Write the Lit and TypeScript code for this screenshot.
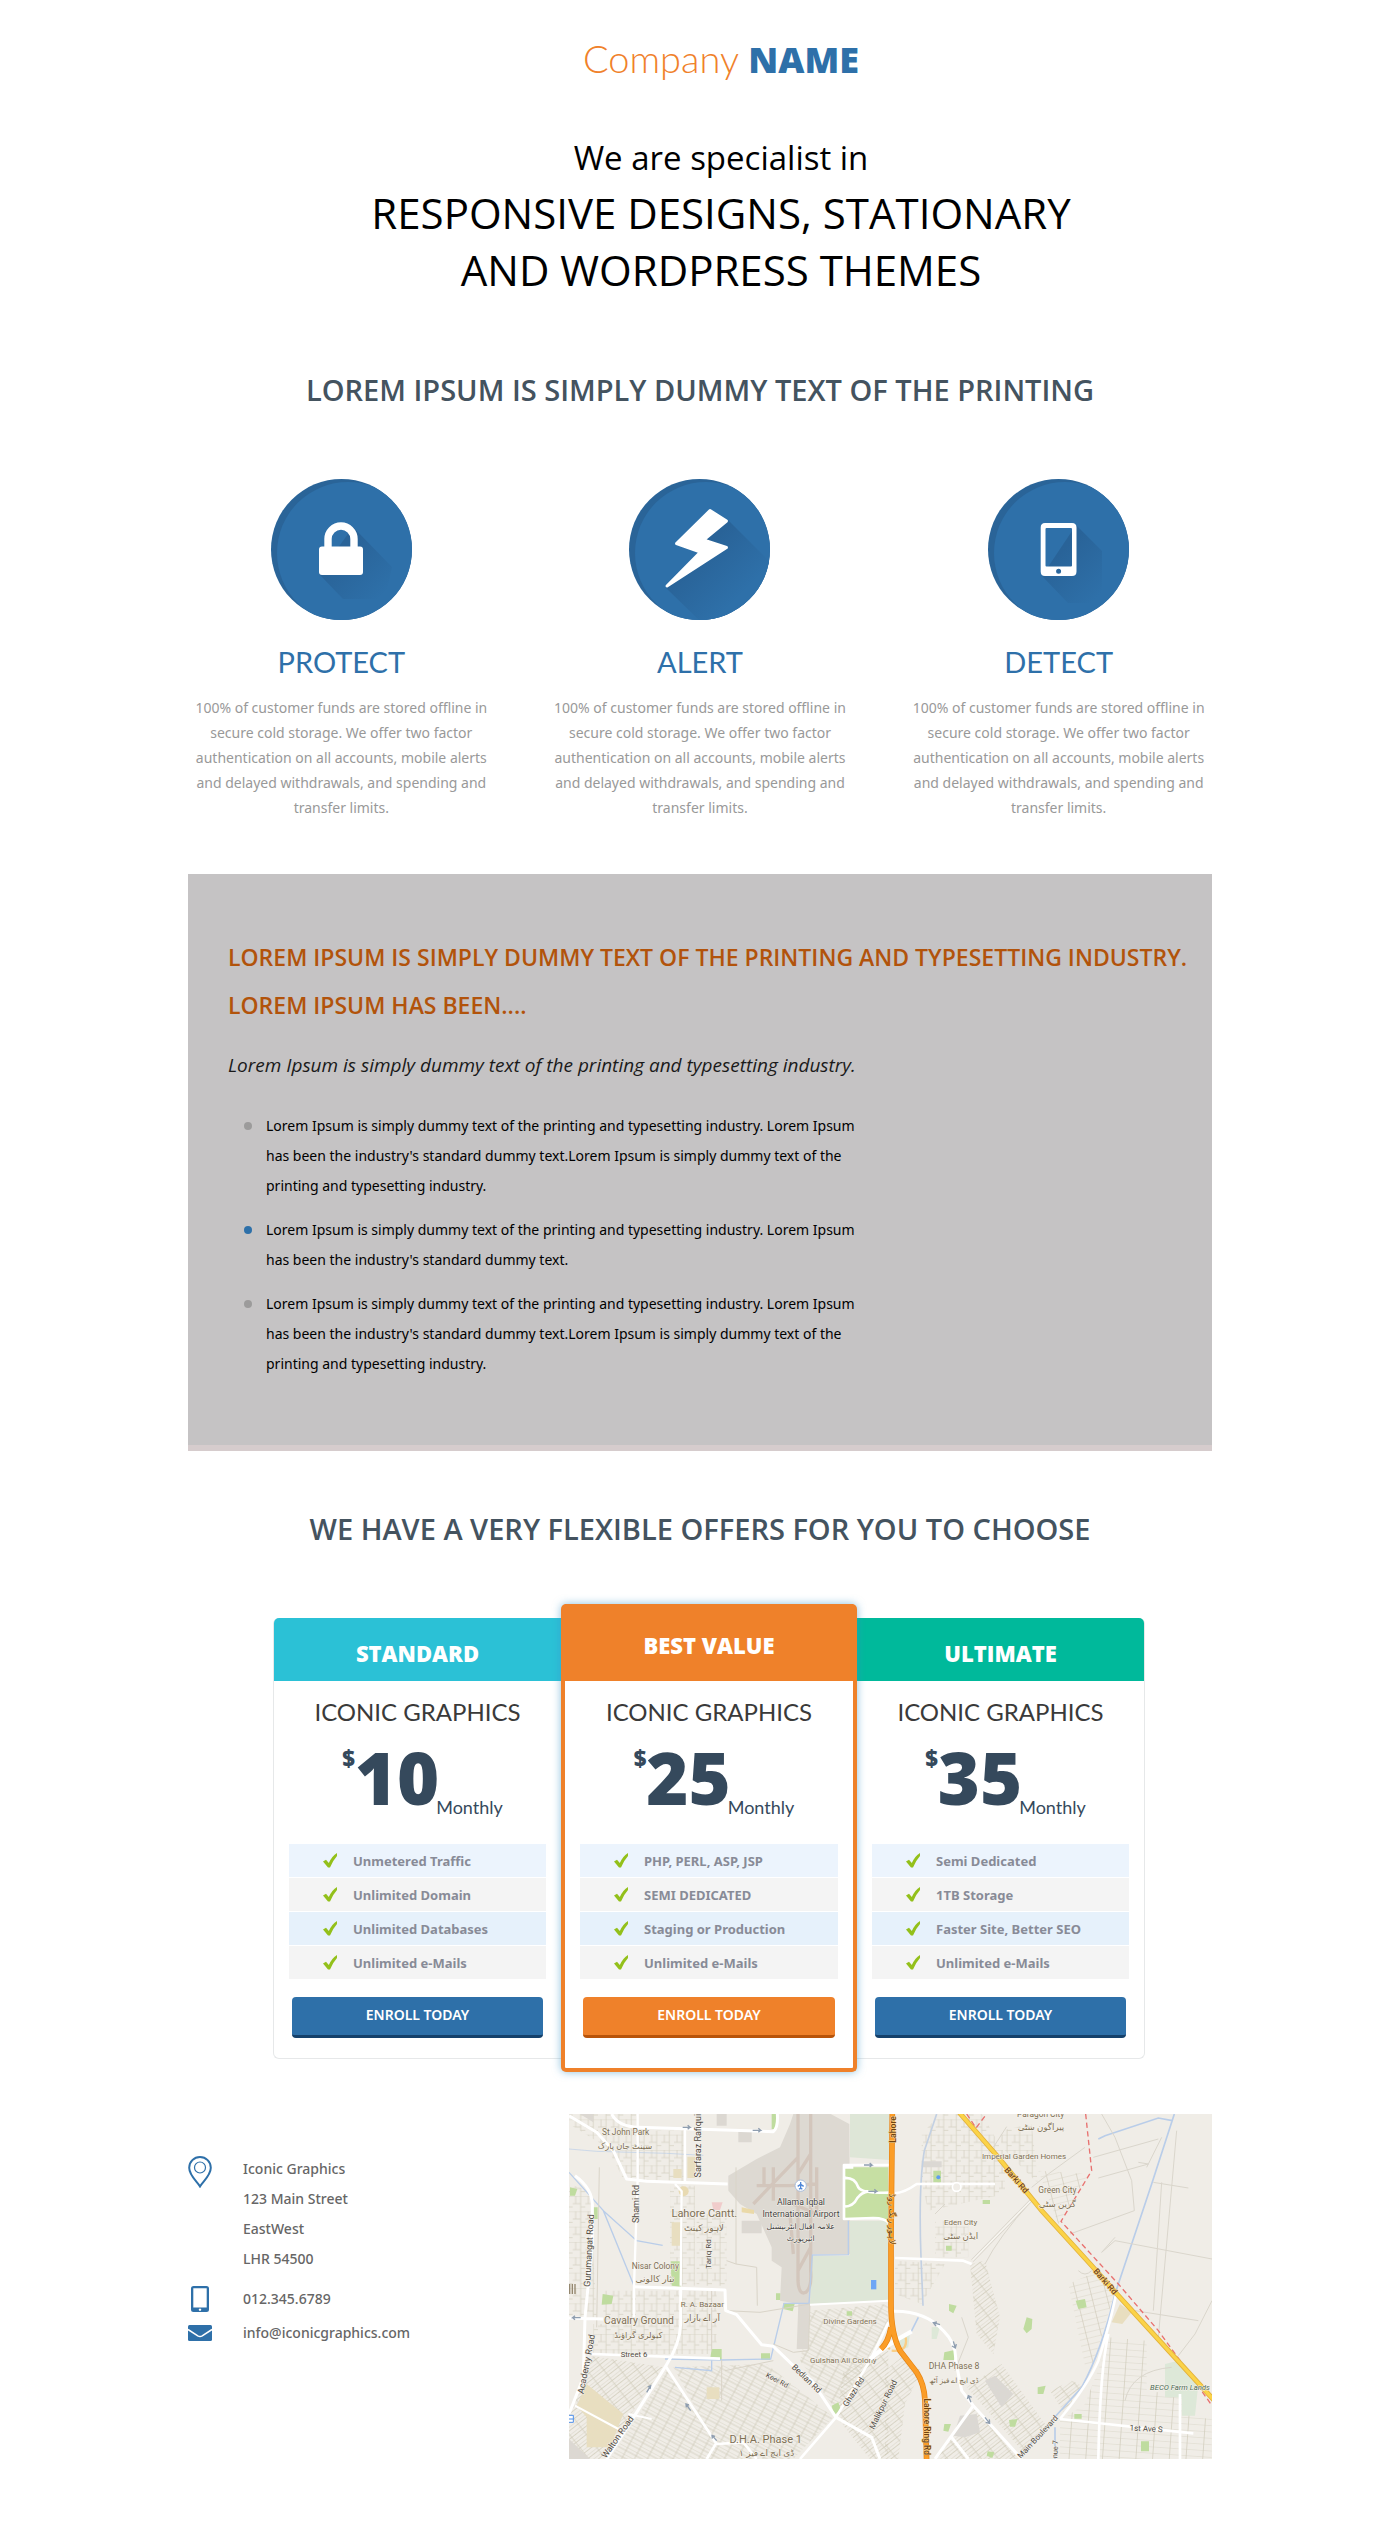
import { LitElement, html, svg, css } from "lit";
import { customElement, property } from "lit/decorators.js";

interface Feature { icon: "lock" | "bolt" | "phone"; title: string; }
interface Plan { tone: "cyan" | "orange" | "green"; name: string; price: string; perks: string[]; }

const FEATURES: Feature[] = [
  { icon: "lock", title: "PROTECT" },
  { icon: "bolt", title: "ALERT" },
  { icon: "phone", title: "DETECT" },
];
const FEATURE_TEXT =
  "100% of customer funds are stored offline in secure cold storage. We offer two factor authentication on all accounts, mobile alerts and delayed withdrawals, and spending and transfer limits.";

const LONG_POINT =
  "Lorem Ipsum is simply dummy text of the printing and typesetting industry. Lorem Ipsum has been the industry's standard dummy text.Lorem Ipsum is simply dummy text of the printing and typesetting industry.";
const SHORT_POINT =
  "Lorem Ipsum is simply dummy text of the printing and typesetting industry. Lorem Ipsum has been the industry's standard dummy text.";

const PLANS: Plan[] = [
  { tone: "cyan", name: "STANDARD", price: "10", perks: ["Unmetered Traffic", "Unlimited Domain", "Unlimited Databases", "Unlimited e-Mails"] },
  { tone: "orange", name: "BEST VALUE", price: "25", perks: ["PHP, PERL, ASP, JSP", "SEMI DEDICATED", "Staging or Production", "Unlimited e-Mails"] },
  { tone: "green", name: "ULTIMATE", price: "35", perks: ["Semi Dedicated", "1TB Storage", "Faster Site, Better SEO", "Unlimited e-Mails"] },
];

@customElement("feature-icon")
export class FeatureIcon extends LitElement {
  @property() name: Feature["icon"] = "lock";

  static styles = css`
    :host { display: block; }
    .disc { display: block; width: 141px; height: 141px; margin: 0 auto; }
  `;

  private glyph() {
    if (this.name === "lock") {
      return svg`
        <path d="M82 48 L121 88 L114 120 L72 120 L48 95 Z" fill="url(#shade)"/>
        <rect x="48" y="67.500" width="44" height="28.500" rx="3" fill="#fff"/>
        <path d="M57 69 V60 A13 13 0 0 1 83 60 V69" fill="none" stroke="#fff" stroke-width="7.400"/>`;
    }
    if (this.name === "bolt") {
      return svg`
        <path d="M99 41 L140 82 L140 141 L70 141 L37 109 L70 74 L46 65 Z" fill="url(#shade)"/>
        <path d="M81 31.500 L97.500 42 L74.500 61 L97.500 68.500 L38 107 L71.500 73 L47.500 64.500 Z"
          fill="#fff" stroke="#fff" stroke-width="3" stroke-linejoin="round"/>`;
    }
    return svg`
      <path d="M88 46 L114 72 L114 124 L80 124 L54 97 Z" fill="url(#shade)"/>
      <path fill-rule="evenodd" fill="#fff" d="M57 44 H84 Q88.500 44 88.500 48.500 V92.500 Q88.500 97 84 97 H57 Q52.700 97 52.700 92.500 V48.500 Q52.700 44 57 44 Z
        M58.500 49 Q57.500 49 57.500 50 V86.500 Q57.500 87.500 58.500 87.500 H83 Q84 87.500 84 86.500 V50 Q84 49 83 49 Z
        M70.600 89.700 A2.500 2.500 0 1 0 70.600 94.700 A2.500 2.500 0 1 0 70.600 89.700 Z"/>`;
  }

  render() {
    return html`<svg class="disc" viewBox="0 0 141 141" aria-hidden="true">
      <defs>
        <clipPath id="rim"><circle cx="70.500" cy="70.500" r="70.500"/></clipPath>
        <linearGradient id="shade" gradientUnits="userSpaceOnUse" x1="62" y1="62" x2="114" y2="114">
          <stop offset="0.200" stop-color="#296398"/><stop offset="1" stop-color="#2e70a9"/>
        </linearGradient>
      </defs>
      <g clip-path="url(#rim)">
        <rect width="141" height="141" fill="#2a6498"/>
        <circle cx="77" cy="74" r="71" fill="#2e70a9"/>
        ${this.glyph()}
      </g>
    </svg>`;
  }
}

/* Street map of the Lahore Cantt. area. West and east halves keep their own origin. */
@customElement("area-map")
export class AreaMap extends LitElement {
  static styles = css`
    :host { display: block; }
    .map { display: block; width: 100%; height: auto; }
    text { font-family: Roboto, "DejaVu Sans", sans-serif; text-anchor: middle; fill: #7d6f54; paint-order: stroke; stroke: #f7f4ee; stroke-width: 3px; stroke-linejoin: round; }
    .road { fill: #504b44; }
    .dark { fill: #434242; }
    .hwy { fill: #6f4310; stroke: #fbd591; font-weight: 500; }
    .park { fill: #4b6a54; font-style: italic; }
  `;

  private label(x: number, y: number, size: number, text: string, turn = 0, kind = "") {
    return svg`<text class=${kind} x=${x} y=${y} font-size=${size} transform=${`rotate(${turn} ${x} ${y})`}>${text}</text>`;
  }

  render() {
    const t = this.label;
    return html`<svg class="map" viewBox="0 0 1929 1035" role="img" aria-label="Map of Lahore Cantt.">
      <defs>
        <pattern id="p0" width="38" height="46" patternUnits="userSpaceOnUse"><path d="M0 0 H38 M9 0 V23 M24 0 V46 M0 23 H24 M24 33 H38" stroke="#d2cdbd" stroke-width="2" fill="none"/></pattern>
        <pattern id="p1" width="34" height="22" patternUnits="userSpaceOnUse" patternTransform="rotate(28)"><path d="M0 0 H34 M0 11 H34 M17 0 V22" stroke="#cdc8b6" stroke-width="2" fill="none"/></pattern>
        <pattern id="p2" width="40" height="20" patternUnits="userSpaceOnUse" patternTransform="rotate(-38)"><path d="M0 0 H40 M0 10 H40 M12 0 V20" stroke="#cdc8b6" stroke-width="2" fill="none"/></pattern>
        <pattern id="p3" width="50" height="19" patternUnits="userSpaceOnUse" patternTransform="rotate(4)"><path d="M0 0 H50 M25 0 V19" stroke="#cfcab9" stroke-width="2" fill="none"/></pattern>
        <pattern id="p4" width="44" height="18" patternUnits="userSpaceOnUse" patternTransform="rotate(-14)"><path d="M0 0 H44 M22 0 V18" stroke="#cfcab9" stroke-width="2" fill="none"/></pattern>
      </defs>
      <rect width="1929" height="1035" fill="#f0ede7"/>

      <g transform="translate(-27 -30)">
        <path d="M27 30 H230 V230 L190 225 L140 130 L27 60 Z M235 80 H370 V230 H235 Z M27 240 L90 260 L110 640 H27 Z M330 245 H405 V545 H330 Z M410 330 L500 330 V545 H410 Z M130 560 H360 V750 H100 V660 H130 Z M370 560 H470 V750 H340 Z" fill="url(#p0)"/>
        <path d="M90 755 L310 790 L120 1065 H27 V930 Z M850 800 L985 740 V1065 H930 L830 940 Z" fill="url(#p2)"/>
        <path d="M340 790 L620 780 L820 940 L700 1065 H240 L150 1065 L320 800 L460 1010 Z M750 620 L985 600 V660 L930 750 L830 920 L720 770 Z" fill="url(#p1)"/>
        <path d="M80 840 L190 930 L150 1030 L80 1030 L80 940 L50 905 Z M382 158 H405 V222 H382 Z M340 195 H365 V222 H340 Z M335 355 H365 V425 H335 Z M440 850 H478 V885 H440 Z" fill="#e8dec0"/>
        <circle cx="371" cy="262" r="15" fill="#e8dab2"/>
        <path d="M27 1005 L90 1065 H27 Z M60 30 H100 V55 Z M470 30 H500 V65 H470 Z M535 80 H575 V115 H535 Z M545 350 H605 V388 H545 Z" fill="#dcd8d2"/>
        <path d="M100 310 H113 V345 H100 Z M128 570 L160 575 L155 600 L125 602 Z M332 472 H362 V548 L335 545 Z M455 735 H485 V768 H450 Z M670 598 L704 600 L698 622 L670 615 Z M603 748 L630 748 V768 H603 Z M648 568 H662 V588 H648 Z M815 905 L835 895 L842 915 L822 935 Z M635 30 H648 V75 H635 Z M30 250 L52 255 L45 275 H30 Z M860 622 H876 V635 H860 Z" fill="#bfdc9f"/>
        <path d="M870 30 H988 V168 L870 160 Z M755 455 H868 V350 H985 V592 L750 600 Z" fill="#dee6d7"/>
        <path d="M505 215 L590 165 L660 130 L690 60 L700 30 H812 L868 60 L870 450 H755 L750 600 L745 735 L710 735 L715 600 L660 590 L665 490 L635 470 V430 L590 330 L540 300 L505 260 Z" fill="#ddd9d2"/>
        <path d="M714 30 V530 Q716 575 738 565 Q756 550 752 500 V30 M590 245 H690 L770 240 M580 300 L714 160 M612 190 V245 M640 190 V290 M690 330 L700 450 M714 210 L752 150 M714 500 L752 430 M770 190 V330 L700 300" fill="none" stroke="#d3c6bc" stroke-width="10"/>
        <path d="M455 295 H488 L480 318 H460 Z" fill="#f0cccb"/>
        <path d="M545 310 L582 318 V330 L545 325 Z" fill="#ead9a8"/>
        <path d="M850 190 L985 190 V345 L850 345 Z" fill="#c6dfa3"/>
        <path d="M933 528 H949 V556 H933 Z" fill="#6fa6f5"/>
        <g fill="none" stroke="#b9cde9" stroke-width="4">
          <path d="M27 205 L130 320 L222 545 M130 320 L230 410 L308 424"/>
          <path d="M27 135 L110 142 L320 148 L430 154" stroke-width="2"/>
          <path d="M865 350 V452 L757 453 L747 598 L672 598 L632 765 L485 768 L315 765 M345 790 L455 800 V765"/>
        </g>
        <g fill="none" stroke="#d9d4c8" stroke-width="3">
          <path d="M118 190 L110 670 M485 768 V890 M455 560 V740 M528 190 V480 L590 490 L592 605 M500 470 L528 480 M500 620 L600 625 L750 600 M640 720 L700 745 L745 740 L750 600 M495 800 L640 770"/>
        </g>
        <g fill="none" stroke="#fff" stroke-width="9" stroke-linejoin="round">
          <path d="M27 35 L110 85 L160 140 L200 225 L260 232 L503 240"/>
          <path d="M155 30 Q175 68 235 70 L640 83 Q655 70 652 30"/>
          <path d="M233 30 V225 L222 545 V640 M375 70 V232 M345 240 L365 262 L362 545" stroke-width="7"/>
          <path d="M222 548 L495 558 L497 620 L530 632 L605 722 L640 727 L700 785 L755 830 L828 940 L935 1000 L960 1065"/>
          <path d="M45 215 Q100 255 97 310 V420 L75 640 L70 820 L27 930 M27 642 L130 645 M362 548 V660 Q360 720 318 785 L205 965 L140 1065"/>
          <path d="M318 788 L470 1020 L550 1015 L590 1065 M470 1015 L440 1065 M985 655 L935 760 L828 940 L720 1065 M95 750 L480 764" stroke-width="8"/>
          <path d="M988 183 H852 V345 L940 342 Q975 342 988 358 M852 222 Q885 220 895 250 Q905 268 988 266 M852 308 Q880 308 892 282 Q905 265 925 262 M850 190 L880 190" stroke-width="8"/>
          <path d="M750 602 L985 590 M45 905 L175 975 M205 930 L275 945" stroke-width="6"/>
        </g>
        <g fill="none" stroke="#8f9eb0" stroke-width="4"><path d="M368 70 H390 l-7 -6 m7 6 l-7 6 M578 79 H602 l-7 -6 m7 6 l-7 6 M912 183 H936 l-7 -6 m7 6 l-7 6 M925 262 H950 l-7 -6 m7 6 l-7 6 M62 641 H38 l7 -6 m-7 6 l7 6 M260 865 l12 -20 m-2 10 l2 -10 l-9 4 M392 920 l-14 -20 m1 10 l-1 -10 l9 3 M470 1010 l-14 -16 m1 10 l-1 -10 l9 3"/></g>
        <circle cx="722" cy="245" r="17" fill="#fff" stroke="#a9bedd" stroke-width="3"/>
        <path d="M722 234 V256 M713 247 L722 241 L731 247 M717 256 L722 252 L727 256" fill="none" stroke="#4d86d8" stroke-width="4"/>
        <path d="M27 934 H40 V955 H27 M27 945 H40" fill="#fff" stroke="#4f8fe8" stroke-width="3"/>
        <path d="M29 540 V570 M37 540 V570 M45 540 V570" stroke="#94876f" stroke-width="4"/>
        ${t(197, 94, 25, "St John Park")}${t(195, 136, 25, "سینٹ جان پارک")}
        ${t(424, 125, 27, "Sarfaraz Rafiqui", -90, "road")}${t(236, 300, 27, "Shami Rd", -90, "road")}
        ${t(96, 440, 27, "Gurumangat Road", -87, "road")}${t(453, 450, 24, "Tariq Rd", -90, "road")}
        ${t(433, 338, 33, "Lahore Cantt.")}${t(432, 382, 27, "لاہور کینٹ")}
        ${t(286, 494, 25, "Nisar Colony")}${t(285, 535, 27, "نثار کالونی")}
        ${t(427, 610, 24, "R. A. Bazaar")}${t(427, 652, 27, "آر اے بازار")}
        ${t(237, 660, 31, "Cavalry Ground")}${t(235, 702, 25, "کیولری گراؤنڈ")}
        ${t(222, 760, 23, "Street 6", 0, "road")}${t(88, 782, 27, "Academy Road", -79, "road")}
        ${t(180, 1004, 26, "Walton Road", -55, "road")}
        ${t(723, 302, 26, "Allama Iqbal", 0, "dark")}${t(723, 340, 26, "International Airport", 0, "dark")}
        ${t(722, 376, 23, "علامہ اقبال انٹرنیشنل", 0, "dark")}${t(722, 410, 23, "ائیرپورٹ", 0, "dark")}
        ${t(870, 660, 24, "Divine Gardens")}${t(850, 777, 24, "Gulshan Ali Colony")}
        ${t(648, 835, 21, "Keer Rd", 28, "road")}${t(734, 830, 25, "Bedian Rd", 44, "road")}
        ${t(888, 868, 25, "Ghazi Rd", -58, "road")}
        ${t(617, 1018, 33, "D.H.A. Phase 1")}${t(620, 1056, 27, "ڈی ایچ اے فیز ۱")}
      </g>

      <g transform="translate(948 -30)">
        <path d="M165 30 H290 L360 150 V270 L130 320 L110 240 V90 Z M345 80 L440 60 L460 240 L350 130 Z M30 470 L180 480 L110 600 L30 570 Z M150 350 H250 V460 H150 Z" fill="url(#p0)"/>
        <path d="M255 480 L300 470 L345 640 L325 750 L275 690 Z M245 850 L350 780 L480 960 L420 1050 L290 900 Z M150 1065 L265 910 L400 1065 Z M50 760 L110 800 L60 900 L40 1065 H0 V800 Z M495 860 L560 830 L600 850 L540 930 Z" fill="url(#p2)"/>
        <path d="M550 540 L640 500 L690 560 L625 780 L600 785 Z M460 200 L610 210 L520 360 Z" fill="url(#p4)"/>
        <path d="M670 700 L785 710 V860 L930 880 V940 L980 945 V1065 H525 V950 L600 900 L650 770 Z" fill="url(#p3)"/>
        <path d="M300 830 L330 815 L385 870 L350 910 Z M225 935 L275 930 L285 985 L240 1000 L205 995 Z M110 172 H170 V190 H110 Z" fill="#dbd8d3"/>
        <path d="M840 780 L880 770 L940 840 L930 935 H890 V880 H840 Z M35 700 L75 685 L70 730 L45 740 Z M140 670 L165 668 L155 705 L140 705 Z" fill="#dde8d8"/>
        <path d="M145 200 H168 V235 H145 Z M425 640 L442 645 L440 675 L425 688 L415 675 Z M572 590 L600 585 L605 610 L580 615 Z M458 850 L482 845 L475 870 L458 870 Z M192 600 L215 605 L205 628 L192 620 Z M178 745 L208 738 V768 H175 Z M178 960 L198 960 L190 983 L175 980 Z M372 948 L398 945 L390 968 H375 Z M768 1012 H792 V1042 H768 Z M293 288 H315 V300 H293 Z M568 930 H590 V944 H568 Z M308 1042 L328 1045 L322 1062 L305 1055 Z M183 425 H200 V440 H183 Z" fill="#bfdc9f"/>
        <path d="M680 655 L705 600 L740 625 L712 660 Z" fill="#e8dec0"/>
        <circle cx="160" cy="220" r="6" fill="#5e9df0"/>
        <g fill="none" stroke="#b9cde9" stroke-width="5">
          <path d="M155 30 L118 140 Q100 250 108 460 L114 605" stroke="#c3d0e2"/>
          <path d="M868 30 L800 240 L690 570 Q650 740 590 850 L410 1050 M640 105 L660 95 L820 42 L862 50"/>
          <path d="M75 690 L100 640 M510 970 V1065"/>
        </g>
        <g fill="none" stroke="#dad6cc" stroke-width="3">
          <path d="M625 160 L820 105 M640 222 L790 180 L760 175 M555 390 L748 320 L740 230 L690 100 L650 30 M650 445 L690 410 L981 465 M805 235 L910 252 M830 235 L805 620 M875 80 L820 700 M750 620 L940 650 M880 755 L930 690 L981 590 M690 400 L650 445 M440 250 L490 210 L600 130 M720 890 Q740 800 860 790 M300 480 Q340 400 440 290 M830 100 L785 190"/>
          <path d="M365 68 L325 130 M150 330 L180 300 M230 640 L250 700 L210 800 M620 500 Q600 520 580 500"/>
        </g>
        <g fill="none" stroke="#fff" stroke-width="9" stroke-linejoin="round">
          <path d="M30 268 Q60 265 95 240 H330 M30 462 L235 470 L260 480" stroke-width="8"/>
          <circle cx="215" cy="249" r="13" fill="#f0ede7" stroke-width="5"/>
          <path d="M25 622 Q120 620 175 680 Q215 720 212 770 L230 860 L265 905 L410 1065 M265 905 L150 1065 M200 1000 L250 1065"/>
          <path d="M692 575 Q680 640 640 770 Q610 840 525 945 M670 690 Q645 800 640 1065 M525 945 L925 988 M885 870 V1065" stroke-width="8"/>
        </g>
        <path d="M262 470 L445 282" stroke="#d5d0c6" stroke-width="9"/><path d="M262 470 L445 282" stroke="#f7f5f0" stroke-width="5"/>
        <g fill="none" stroke="#8f9eb0" stroke-width="4"><path d="M165 662 l-20 -6 m8 10 l-8 -10 l11 -2 M205 712 l6 20 m-10 -6 l10 6 l3 -12 M258 895 l-8 -20 m-3 10 l3 -10 l10 5 M300 940 l14 18 m-12 -3 l12 3 l-1 -12"/></g>
        <path d="M245 30 L273 72 L305 30 M602 30 L620 200 L528 352 L700 540 L820 680 L900 790 L981 905" fill="none" stroke="#e8716f" stroke-width="4" stroke-dasharray="16 10"/>
        <path d="M218 20 L340 160 L470 320 L620 485 L700 575 L860 750 L990 892" fill="none" stroke="#e3b23c" stroke-width="15"/>
        <path d="M218 20 L340 160 L470 320 L620 485 L700 575 L860 750 L990 892" fill="none" stroke="#fbd348" stroke-width="10"/>
        <path d="M20 740 Q70 745 62 700 M15 735 Q-5 720 -10 720" fill="none" stroke="#f9ce85" stroke-width="7"/>
        <path d="M-45 765 Q0 725 80 682" fill="none" stroke="#fff" stroke-width="13"/>
        <path d="M22 20 L18 400 V600 Q18 690 45 740 L95 805 Q118 840 120 890 L125 1075 M18 670 Q10 715 -12 735" fill="none" stroke="#e58312" stroke-width="17"/>
        <path d="M22 20 L18 400 V600 Q18 690 45 740 L95 805 Q118 840 120 890 L125 1075 M18 670 Q10 715 -12 735" fill="none" stroke="#fb9d27" stroke-width="13"/>
        ${t(32, 76, 26, "Lahore", -90, "hwy")}${t(12, 345, 27, "لاہور رنگ روڈ", 90, "hwy")}
        ${t(116, 968, 25, "Lahore Ring Rd", 90, "hwy")}
        ${t(467, 38, 25, "Paragon City")}${t(468, 78, 26, "پیراگون سٹی")}
        ${t(417, 165, 24, "Imperial Garden Homes")}
        ${t(388, 234, 25, "Barki Rd", 49, "hwy")}${t(655, 538, 25, "Barki Rd", 49, "hwy")}
        ${t(517, 268, 25, "Green City")}${t(517, 308, 26, "گرین سٹی")}
        ${t(227, 363, 24, "Eden City")}${t(227, 405, 26, "ایڈن سٹی")}
        ${t(207, 796, 26, "DHA Phase 8")}${t(207, 838, 22, "ڈی ایچ اے فیز آٹھ")}
        ${t(885, 858, 23, "BECO Farm Lands", 0, "park")}
        ${t(783, 982, 24, "1st Ave S", 3, "road")}${t(464, 1004, 24, "Main Boulevard", -47, "road")}
        ${t(518, 1036, 22, "nue 7", -88, "road")}${t(2, 905, 25, "Malikpur Road", -64, "road")}
      </g>
    </svg>`;
  }
}

@customElement("app-root")
export class AppRoot extends LitElement {
  static styles = css`
    :host { display: block; background: #fff; font-family: "Open Sans", "Noto Sans", sans-serif; }
    * { box-sizing: border-box; }
    h1, h2, h3, p, ul { margin: 0; padding: 0; font-weight: 400; }
    ul { list-style: none; }
    a { color: inherit; text-decoration: none; }
    .page { max-width: 1024px; margin: 0 auto; padding: 36px 0 73px; }

    .intro { padding-left: 42px; text-align: center; }
    .logo { display: block; font: 300 38px/44px Lato, sans-serif; color: #f0812a; }
    .logo b { font: 800 36px/36px "Open Sans", sans-serif; color: #2e70a9; }
    .hero { margin-top: 52px; color: #000; font-size: 42px; line-height: 57px; }
    .hero .lead { display: block; font-size: 33px; line-height: 52px; }
    .hero .line { display: block; }
    .section-title { margin-top: 58px; text-align: center; font-size: 29px; line-height: 40px; font-weight: 600; color: #44535f; }
    .intro + .section-title { margin-top: 72px; }

    .features { display: grid; grid-template-columns: repeat(3, 1fr); gap: 52px; margin-top: 69px; text-align: center; }
    .features h3 { margin-top: 22px; font: 400 29px/40px Lato, sans-serif; color: #2e70a9; }
    .features p { margin-top: 13px; font: 400 14px/25px "Noto Sans", sans-serif; color: #999; }

    .panel { margin-top: 54px; padding: 59px 16px 66px 40px; background: #c5c3c4; border-bottom: 6px solid #d6cccd; }
    .panel h2 { font-size: 23px; line-height: 48px; font-weight: 600; color: #b2530b; }
    .panel .note { margin-top: 21px; font-size: 19px; line-height: 30px; font-style: italic; color: #1a1a1a; }
    .points { display: grid; gap: 14px; margin-top: 31px; padding-left: 16px; max-width: 648px; }
    .points li { display: grid; grid-template-columns: 8px 1fr; gap: 14px; font: 400 14px/30px "Noto Sans", sans-serif; color: #000; }
    .points li::before { content: ""; width: 8px; height: 8px; margin-top: 11px; border-radius: 50%; background: #9c9b9b; }
    .points li.active::before { background: #2e70a9; }

    .plans { display: grid; grid-template-columns: 1fr 296px 1fr; align-items: start; margin-top: 55px; padding: 0 67px 0 85px; }
    .plan { margin-top: 14px; padding-bottom: 20px; border: 1px solid #e6e8e9; border-top: 0; border-radius: 6px; text-align: center; background: #fff; }
    .plan.cyan { border-right: 0; border-radius: 6px 0 0 6px; }
    .plan.green { border-left: 0; border-radius: 0 6px 6px 0; }
    .plan.orange { z-index: 1; margin-top: 0; padding-bottom: 30px; border: 4px solid #ef812a; border-top: 0; border-radius: 5px; box-shadow: 0 0 9px rgba(60, 150, 200, 0.6); }
    .plan h3 { padding: 23px 0 16px; font: 800 22px/24px "Open Sans", sans-serif; color: #fff; }
    .cyan h3 { background: #2bc1d6; border-radius: 5px 0 0 0; }
    .orange h3 { padding: 29px 0 24px; background: #ef812a; }
    .green h3 { background: #00b99b; border-radius: 0 5px 0 0; }
    .brand { margin-top: 16px; font: 400 24px/30px Lato, sans-serif; color: #3a3a3a; }
    .price { display: flex; justify-content: center; align-items: flex-start; margin-top: 14px; padding-left: 10px; font-family: "Open Sans", sans-serif; color: #35495c; }
    .price .sign { padding-top: 5px; font-size: 22px; line-height: 24px; font-weight: 800; }
    .price .sum { font-size: 72px; line-height: 72px; font-weight: 800; }
    .price .term { margin-left: -3px; padding-top: 54px; font-family: Lato, sans-serif; font-size: 18px; line-height: 24px; }
    .perks { display: grid; gap: 1px; margin: 25px 15px 18px; }
    .perks li { display: flex; align-items: center; gap: 16px; height: 33px; padding-left: 34px; background: #f4f4f4; font: 700 13px/20px "Noto Sans", sans-serif; color: #888b97; }
    .perks li:nth-child(1) { background: #ecf4fd; }
    .perks li:nth-child(3) { background: #e6f1fb; }
    .tick { width: 14px; height: 15px; fill: #93c01a; }
    .enroll { display: block; width: calc(100% - 36px); height: 41px; margin: 0 auto; padding: 0 0 3px; border: 0; border-bottom: 3px solid #15416b; border-radius: 4px; background: #2e70a9; font: 600 14px/20px "Noto Sans", sans-serif; color: #fff; cursor: pointer; }
    .orange .enroll { background: #ef812a; border-bottom-color: #b8540a; }

    .footer { display: grid; grid-template-columns: 326px 1fr; gap: 55px; margin-top: 42px; }
    .contact { padding-top: 40px; font: 500 14px/30px "Noto Sans", sans-serif; color: #666; }
    .entry { display: grid; grid-template-columns: 24px 1fr; gap: 31px; align-items: center; }
    .entry.place { align-items: start; }
    .entry.phone { margin-top: 10px; }
    .entry.mail { margin-top: 4px; }
    .entry span { display: block; }
    .entry svg { display: block; margin: 0 auto; }
    .place svg { margin-top: 2px; }
    @media (max-width: 1024px) {
      .page { padding-left: 16px; padding-right: 16px; }
    }
    @media (max-width: 900px) {
      .intro { padding-left: 0; }
      .features, .plans, .footer { grid-template-columns: 1fr; }
      .plans { padding: 0; }
    }
  `;

  private renderPlan(plan: Plan) {
    return html`<article class="plan ${plan.tone}">
      <h3>${plan.name}</h3>
      <p class="brand">ICONIC GRAPHICS</p>
      <p class="price"><span class="sign">$</span><span class="sum">${plan.price}</span><span class="term">Monthly</span></p>
      <ul class="perks">
        ${plan.perks.map((perk) => html`<li>
          <svg class="tick" viewBox="0 0 14 15" aria-hidden="true"><path d="M0 8.500 L3 6.800 L5.800 10 Q9 3 14 0 V3 Q9.500 8 7 14.500 H5 Z"/></svg>${perk}
        </li>`)}
      </ul>
      <button class="enroll" type="button">ENROLL TODAY</button>
    </article>`;
  }

  render() {
    return html`<main class="page">
      <header class="intro">
        <a class="logo" href="#">Company <b>NAME</b></a>
        <h1 class="hero">
          <span class="lead">We are specialist in</span>
          <span class="line">RESPONSIVE DESIGNS, STATIONARY</span>
          <span class="line">AND WORDPRESS THEMES</span>
        </h1>
      </header>

      <h2 class="section-title">LOREM IPSUM IS SIMPLY DUMMY TEXT OF THE PRINTING</h2>
      <section class="features">
        ${FEATURES.map((f) => html`<article>
          <feature-icon .name=${f.icon}></feature-icon>
          <h3>${f.title}</h3>
          <p>${FEATURE_TEXT}</p>
        </article>`)}
      </section>

      <section class="panel">
        <h2>LOREM IPSUM IS SIMPLY DUMMY TEXT OF THE PRINTING AND TYPESETTING INDUSTRY. LOREM IPSUM HAS BEEN....</h2>
        <p class="note">Lorem Ipsum is simply dummy text of the printing and typesetting industry.</p>
        <ul class="points">
          <li>${LONG_POINT}</li>
          <li class="active">${SHORT_POINT}</li>
          <li>${LONG_POINT}</li>
        </ul>
      </section>

      <h2 class="section-title">WE HAVE A VERY FLEXIBLE OFFERS FOR YOU TO CHOOSE</h2>
      <section class="plans">${PLANS.map((p) => this.renderPlan(p))}</section>

      <footer class="footer">
        <address class="contact">
          <div class="entry place">
            <svg width="24" height="32" viewBox="0 0 24 32" fill="none" stroke="#2e70a9" aria-hidden="true">
              <path stroke-width="2" d="M12 30.500 C9 25.500 1.200 19.500 1.200 11.800 A10.800 10.800 0 0 1 22.800 11.800 C22.800 19.500 15 25.500 12 30.500 Z"/>
              <circle cx="12" cy="11.500" r="5.500" stroke-width="1.200"/>
            </svg>
            <div><span>Iconic Graphics</span><span>123 Main Street</span><span>EastWest</span><span>LHR 54500</span></div>
          </div>
          <div class="entry phone">
            <svg width="18" height="26" viewBox="0 0 18 26" aria-hidden="true">
              <path fill="#2e70a9" fill-rule="evenodd" d="M2.500 0 H15.500 Q18 0 18 2.500 V23.500 Q18 26 15.500 26 H2.500 Q0 26 0 23.500 V2.500 Q0 0 2.500 0 Z M2.300 2.300 V21.500 H15.700 V2.300 Z M9 22.500 a1.200 1.200 0 1 0 0.010 0 Z"/>
            </svg>
            <a href="tel:0123456789">012.345.6789</a>
          </div>
          <div class="entry mail">
            <svg width="24" height="16" viewBox="0 0 24 16" aria-hidden="true">
              <rect width="24" height="16" rx="1.500" fill="#2e70a9"/>
              <path d="M0 4.500 L9.800 10.800 Q12 12 14.200 10.800 L24 4.500" fill="none" stroke="#fff" stroke-width="1.500"/>
            </svg>
            <a href="mailto:info@iconicgraphics.com">info@iconicgraphics.com</a>
          </div>
        </address>
        <area-map></area-map>
      </footer>
    </main>`;
  }
}
